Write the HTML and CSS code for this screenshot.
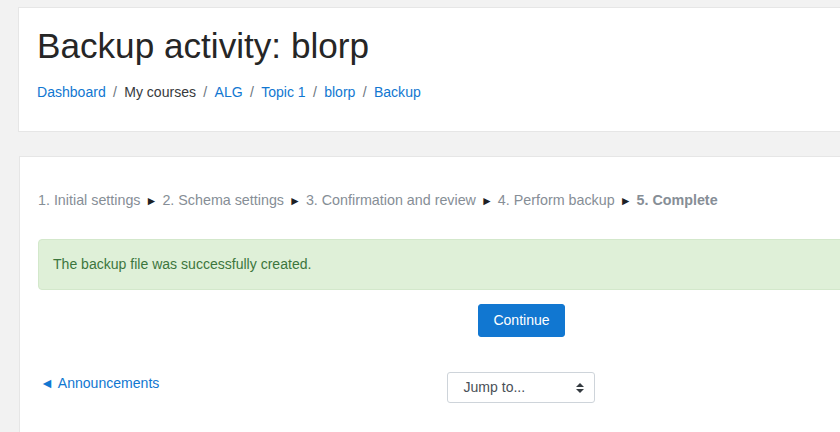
FILE: index.html
```html
<!DOCTYPE html>
<html lang="en">
<head>
<meta charset="utf-8">
<title>Backup activity: blorp</title>
<link rel="stylesheet" href="styles.css">
</head>
<body>
<div class="page">
  <header class="card page-header">
    <h1 class="title">Backup activity: blorp</h1>
    <nav class="breadcrumb">
      <a href="#">Dashboard</a><span class="sep">/</span><span class="crumb">My courses</span><span class="sep">/</span><a href="#">ALG</a><span class="sep">/</span><a href="#">Topic 1</a><span class="sep">/</span><a href="#">blorp</a><span class="sep">/</span><a href="#">Backup</a>
    </nav>
  </header>

  <main class="card region-main">
    <div class="steps">
      <span>1. Initial settings</span><span class="arrow">►</span><span>2. Schema settings</span><span class="arrow">►</span><span>3. Confirmation and review</span><span class="arrow">►</span><span>4. Perform backup</span><span class="arrow">►</span><strong>5. Complete</strong>
    </div>
    <div class="alert">The backup file was successfully created.</div>
    <div class="actions">
      <button class="btn" type="button">Continue</button>
    </div>
    <div class="activity-nav">
      <div class="nav-col nav-prev"><a href="#">◄&nbsp;Announcements</a></div>
      <div class="nav-col nav-mid">
        <div class="select">
          <span>Jump to...</span>
          <svg class="caret" width="8" height="10" viewBox="0 0 8 10"><path d="M0 4 L4 0 L8 4 Z M0 6 L8 6 L4 10 Z" fill="#343a40"/></svg>
        </div>
      </div>
      <div class="nav-col nav-next"></div>
    </div>
  </main>
</div>
</body>
</html>
```

FILE: styles.css
```css
html, body {
  margin: 0;
  padding: 0;
  background: #f2f2f2;
  overflow: hidden;
}
body {
  font-family: "Liberation Sans", Arial, sans-serif;
  font-size: 14.0625px;
  line-height: 1.5;
  color: #373a3c;
}
a {
  color: #1177d1;
  text-decoration: none;
}
.page {
  width: 1006px;
  padding: 7px 0 0 18px;
}
.card {
  background: #fff;
  border: 1px solid #e6e6e6;
}
.page-header {
  padding: 17px 18px 27px 18px;
  height: 79px;
}
.title {
  margin: 0;
  font-size: 35.15px;
  font-weight: 400;
  line-height: 1.2;
  color: #262626;
}
.breadcrumb {
  margin-top: 15px;
  display: flex;
  align-items: baseline;
}
.crumb { color: #373a3c; }
.sep {
  color: #6c757d;
  padding: 0 7.3px;
}
.region-main {
  margin-top: 24px;
  margin-left: 1px;
  padding: 33px 18px 40px 18px;
}
.steps {
  color: #868e96;
  font-size: 14.3px;
  line-height: 21px;
  height: 21px;
  display: flex;
  align-items: baseline;
  white-space: nowrap;
}
.steps strong {
  font-weight: 700;
}
.arrow {
  color: #1d2125;
  font-size: 12px;
  padding: 0 5px 0 5px;
}
.alert {
  margin-top: 28px;
  padding: 14px 14px;
  line-height: 21px;
  background: #dff0d8;
  border: 1px solid #d3e8cb;
  border-radius: 4px;
  color: #3c763d;
}
.actions {
  display: flex;
  justify-content: center;
  margin-top: 14px;
}
.btn {
  font-family: inherit;
  font-size: 14.0625px;
  line-height: 21px;
  padding: 5px 14px;
  height: 33px;
  border: 1px solid #1177d1;
  background: #1177d1;
  color: #fff;
  border-radius: 3px;
}
.activity-nav {
  margin-top: 35px;
  display: grid;
  grid-template-columns: 1fr 1fr 1fr;
  align-items: start;
}
.nav-prev {
  padding-left: 2px;
  padding-top: 1px;
}
.nav-mid {
  display: flex;
  justify-content: center;
}
.select {
  box-sizing: border-box;
  width: 148px;
  height: 31px;
  border: 1px solid #ced4da;
  border-radius: 3px;
  display: flex;
  align-items: center;
  justify-content: space-between;
  padding: 0 10px 0 15px;
  color: #495057;
}
.caret {
  display: block;
}
```
